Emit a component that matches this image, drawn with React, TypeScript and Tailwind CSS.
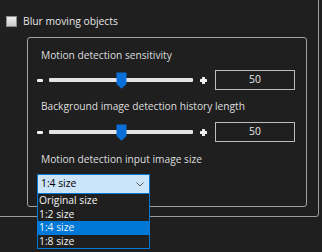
import React from "react";

const Minus = () => <div className="w-[6px] h-[3px] bg-[#f0f0f0] rounded-[1px] shrink-0" />;

const Plus = () => (
  <svg width="7" height="7" viewBox="0 0 7 7" className="shrink-0">
    <rect x="2" y="0" width="3" height="7" rx="0.5" fill="#f0f0f0" />
    <rect x="0" y="2" width="7" height="3" rx="0.5" fill="#f0f0f0" />
  </svg>
);

const Slider = ({ value }: { value: number }) => {
  const left = (value / 100) * (144 - 11);
  return (
    <div className="relative w-[144px] h-[20px] shrink-0 flex items-center">
      <div className="w-full h-[4px] bg-[#e4e4e4] rounded-[1px]" />
      <svg
        width="11"
        height="17"
        viewBox="0 0 11 17"
        className="absolute top-[2px]"
        style={{ left: Math.round(left) }}
      >
        <path d="M0.5 0.5 H10.5 V12 L5.5 16.8 L0.5 12 Z" fill="#0a6fd8" />
      </svg>
    </div>
  );
};

const SliderRow = ({ value }: { value: number }) => (
  <div className="flex items-center h-[20px]">
    <Minus />
    <div className="ml-[6px]">
      <Slider value={value} />
    </div>
    <div className="ml-[7px]">
      <Plus />
    </div>
    <div className="ml-[8px] w-[80px] h-[20px] border border-[#bcbcbc] flex items-center justify-center text-[10.3px] text-[#e8e8e8]">
      {value}
    </div>
  </div>
);

const Label = ({ children, className = "" }: { children: React.ReactNode; className?: string }) => (
  <div className={"ml-[4px] h-[14px] leading-[14px] text-[10.2px] text-[#dedede] " + className}>{children}</div>
);

const options = ["Original size", "1:2 size", "1:4 size", "1:8 size"];

export default function App() {
  return (
    <div className="w-[322px] h-[252px] overflow-hidden bg-[#1f1f1f] font-['Open_Sans',sans-serif]">
      <div className="-mt-[10px] -ml-[10px] w-[329px] h-[227px] border border-[#9d9d9d] rounded-[3px] pt-[24px] pl-[15px]">
        <div className="flex items-center h-[13px]">
          <div className="w-[11px] h-[11px] border border-[#8c8c8c] bg-gradient-to-b from-[#eeeeee] to-[#c9c9c9]" />
          <span className="ml-[6px] text-[10.3px] leading-[13px] text-[#e6e6e6]">Blur moving objects</span>
        </div>

        <div className="mt-[9px] ml-[21px] w-[280px] h-[170px] border border-[#a3a3a3] rounded-[3px] pt-[10px] px-[9px]">
          <Label>Motion detection sensitivity</Label>
          <div className="mt-[8px]">
            <SliderRow value={50} />
          </div>
          <Label className="mt-[9px]">Background image detection history length</Label>
          <div className="mt-[9px]">
            <SliderRow value={50} />
          </div>
          <Label className="mt-[10px]">Motion detection input image size</Label>

          <div className="relative mt-[8px] w-[113px]">
            <div className="h-[20px] border border-[#0078d7] bg-[#cce4f7] flex items-center justify-between pl-[3px] pr-[5px]">
              <span className="text-[10.3px] text-black">1:4 size</span>
              <svg width="8" height="5" viewBox="0 0 8 5">
                <path d="M0.5 0.5 L4 4 L7.5 0.5" fill="none" stroke="#5a5a5a" strokeWidth="1" />
              </svg>
            </div>
            <div className="absolute left-0 top-[19px] w-[113px] border border-[#0078d7] bg-[#1f1f1f]">
              {options.map((o) => (
                <div
                  key={o}
                  className={
                    "h-[13.5px] leading-[13.5px] pl-[1px] text-[10.3px] text-[#f2f2f2] " +
                    (o === "1:4 size" ? "bg-[#0078d7]" : "")
                  }
                >
                  {o}
                </div>
              ))}
            </div>
          </div>
        </div>
      </div>
    </div>
  );
}
